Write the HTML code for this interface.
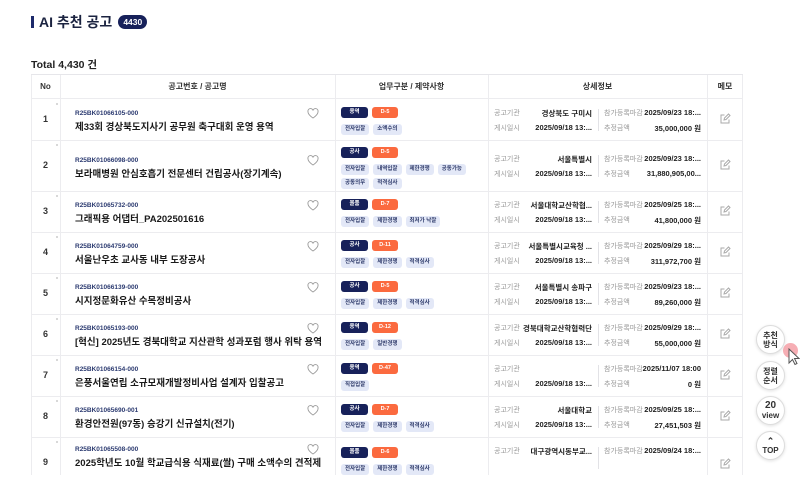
<!DOCTYPE html>
<html><head><meta charset="utf-8">
<style>
*{margin:0;padding:0;box-sizing:border-box}
body{width:800px;height:466px;overflow:hidden;background:#fff;font-family:"Liberation Sans","Noto Sans CJK KR",sans-serif;color:#222;position:relative}
.abs{position:absolute}
.title{left:31px;top:12px;font-size:14px;font-weight:bold;color:#1b2340;display:flex;align-items:center}
.title .bar{width:3px;height:12px;background:#1d2a6b;margin-right:5px}
.badge{background:#17215a;color:#fff;font-size:8.5px;font-weight:bold;border-radius:8px;padding:2px 5px;margin-left:6px;line-height:10px}
.total{left:31px;top:57px;font-size:10.5px;font-weight:bold;color:#222}
.tbl{left:31px;top:74px;width:712px;height:400px;border-top:1px solid #e6e6ea}
.hdr{position:absolute;left:0;top:0;width:712px;height:24px;border-bottom:1px solid #ececef;font-size:8px;font-weight:bold;color:#333}
.hdr div{position:absolute;top:0;height:24px;line-height:24px;text-align:center}
.vl{position:absolute;top:0;width:1px;height:400px;background:#ececef}
.row{position:absolute;left:0;width:712px;border-bottom:1px solid #ececef}
.no{position:absolute;left:0;width:29px;text-align:center;font-size:9px;font-weight:bold;color:#333}
.dot{position:absolute;left:25px;top:3px;width:2px;height:2px;border-radius:1px;background:#ccc}
.code{position:absolute;left:44px;font-size:6.5px;color:#2b3a70;font-weight:bold}
.nm{position:absolute;left:44px;font-size:9.5px;font-weight:bold;color:#1a1a1a;white-space:nowrap}
.heart{position:absolute;left:276px;width:12px;height:11px}
.tags{position:absolute;left:310px;width:148px;display:flex;flex-wrap:wrap;gap:3px 4px}
.t{height:11px;line-height:11px;font-size:5.5px;text-align:center;border-radius:3px;padding:0 4px;background:#e3e8f7;color:#2f3b6b;font-weight:bold}
.ty{background:#17215a;color:#fff;width:27px;padding:0}
.d{background:#fb6a3f;color:#fff;width:26px;padding:0}
.br{flex-basis:100%;height:0}
.lb{position:absolute;font-size:7px;color:#999}
.v{position:absolute;font-size:7.5px;font-weight:bold;color:#222;text-align:right;white-space:nowrap}
.sep{position:absolute;left:567px;width:1px;height:22px;background:#e2e2e6}
.memo{position:absolute;left:688px;width:12px;height:12px}
.fb{position:absolute;left:756px;width:29px;height:29px;border-radius:50%;background:#fff;border:1px solid #ddd;box-shadow:0 1px 3px rgba(0,0,0,.12);font-size:8px;font-weight:bold;color:#333;text-align:center;display:flex;flex-direction:column;justify-content:center;line-height:9px}
</style></head><body>
<div class="abs title"><span class="bar"></span>AI 추천 공고<span class="badge">4430</span></div>
<div class="abs total">Total 4,430 건</div>

<div class="abs tbl">
<div class="hdr">
 <div style="left:0;width:29px">No</div>
 <div style="left:29px;width:275px">공고번호 / 공고명</div>
 <div style="left:304px;width:153px">업무구분 / 제약사항</div>
 <div style="left:457px;width:219px">상세정보</div>
 <div style="left:676px;width:36px">메모</div>
</div>
<div class="vl" style="left:0"></div>
<div class="vl" style="left:29px"></div>
<div class="vl" style="left:304px"></div>
<div class="vl" style="left:457px"></div>
<div class="vl" style="left:676px"></div>
<div class="vl" style="left:711px"></div>

<div class="row" style="top:25px;height:41px">
 <div class="dot"></div><div class="no" style="top:14px">1</div>
 <div class="code" style="top:10px">R25BK01066105-000</div>
 <div class="nm" style="top:19px">제33회 경상북도지사기 공무원 축구대회 운영 용역</div>
 <svg class="heart" style="top:8px" viewBox="0 0 24 22"><path d="M12 20S2 14 2 7.5A5 5 0 0 1 12 5a5 5 0 0 1 10 2.5C22 14 12 20 12 20z" fill="none" stroke="#999" stroke-width="1.8"/></svg>
 <div class="tags" style="top:7px"><span class="t ty">용역</span><span class="t d">D-5</span><span class="br"></span><span class="t">전자입찰</span><span class="t">소액수의</span></div>
 <div class="lb" style="left:463px;top:8px">공고기관</div><div class="v" style="right:151px;top:8px">경상북도 구미시</div>
 <div class="lb" style="left:463px;top:23px">게시일시</div><div class="v" style="right:151px;top:23px">2025/09/18 13:...</div>
 <div class="sep" style="top:9px"></div>
 <div class="lb" style="left:573px;top:8px">참가등록마감</div><div class="v" style="right:42px;top:8px">2025/09/23 18:...</div>
 <div class="lb" style="left:573px;top:23px">추정금액</div><div class="v" style="right:42px;top:23px">35,000,000 원</div>
 <svg class="memo" style="top:13px" viewBox="0 0 24 24"><path d="M20 13v7H4V4h7" fill="none" stroke="#aaa" stroke-width="2"/><path d="M10 14l1-4 8-8 3 3-8 8z" fill="none" stroke="#aaa" stroke-width="2"/></svg>
</div>

<div class="row" style="top:66px;height:51px">
 <div class="dot"></div><div class="no" style="top:19px">2</div>
 <div class="code" style="top:16px">R25BK01066098-000</div>
 <div class="nm" style="top:25px">보라매병원 안심호흡기 전문센터 건립공사(장기계속)</div>
 <svg class="heart" style="top:14px" viewBox="0 0 24 22"><path d="M12 20S2 14 2 7.5A5 5 0 0 1 12 5a5 5 0 0 1 10 2.5C22 14 12 20 12 20z" fill="none" stroke="#999" stroke-width="1.8"/></svg>
 <div class="tags" style="top:6px"><span class="t ty">공사</span><span class="t d">D-5</span><span class="br"></span><span class="t">전자입찰</span><span class="t">내역입찰</span><span class="t">제한경쟁</span><span class="t">공동가능</span><span class="t">공동의무</span><span class="t">적격심사</span></div>
 <div class="lb" style="left:463px;top:13px">공고기관</div><div class="v" style="right:151px;top:13px">서울특별시</div>
 <div class="lb" style="left:463px;top:28px">게시일시</div><div class="v" style="right:151px;top:28px">2025/09/18 13:...</div>
 <div class="sep" style="top:14px"></div>
 <div class="lb" style="left:573px;top:13px">참가등록마감</div><div class="v" style="right:42px;top:13px">2025/09/23 18:...</div>
 <div class="lb" style="left:573px;top:28px">추정금액</div><div class="v" style="right:42px;top:28px">31,880,905,00...</div>
 <svg class="memo" style="top:18px" viewBox="0 0 24 24"><path d="M20 13v7H4V4h7" fill="none" stroke="#aaa" stroke-width="2"/><path d="M10 14l1-4 8-8 3 3-8 8z" fill="none" stroke="#aaa" stroke-width="2"/></svg>
</div>

<div class="row" style="top:117px;height:41px">
 <div class="dot"></div><div class="no" style="top:14px">3</div>
 <div class="code" style="top:10px">R25BK01065732-000</div>
 <div class="nm" style="top:19px">그래픽용 어댑터_PA202501616</div>
 <svg class="heart" style="top:8px" viewBox="0 0 24 22"><path d="M12 20S2 14 2 7.5A5 5 0 0 1 12 5a5 5 0 0 1 10 2.5C22 14 12 20 12 20z" fill="none" stroke="#999" stroke-width="1.8"/></svg>
 <div class="tags" style="top:7px"><span class="t ty">물품</span><span class="t d">D-7</span><span class="br"></span><span class="t">전자입찰</span><span class="t">제한경쟁</span><span class="t">최저가 낙찰</span></div>
 <div class="lb" style="left:463px;top:8px">공고기관</div><div class="v" style="right:151px;top:8px">서울대학교산학협...</div>
 <div class="lb" style="left:463px;top:23px">게시일시</div><div class="v" style="right:151px;top:23px">2025/09/18 13:...</div>
 <div class="sep" style="top:9px"></div>
 <div class="lb" style="left:573px;top:8px">참가등록마감</div><div class="v" style="right:42px;top:8px">2025/09/25 18:...</div>
 <div class="lb" style="left:573px;top:23px">추정금액</div><div class="v" style="right:42px;top:23px">41,800,000 원</div>
 <svg class="memo" style="top:13px" viewBox="0 0 24 24"><path d="M20 13v7H4V4h7" fill="none" stroke="#aaa" stroke-width="2"/><path d="M10 14l1-4 8-8 3 3-8 8z" fill="none" stroke="#aaa" stroke-width="2"/></svg>
</div>

<div class="row" style="top:158px;height:41px">
 <div class="dot"></div><div class="no" style="top:14px">4</div>
 <div class="code" style="top:10px">R25BK01064759-000</div>
 <div class="nm" style="top:19px">서울난우초 교사동 내부 도장공사</div>
 <svg class="heart" style="top:8px" viewBox="0 0 24 22"><path d="M12 20S2 14 2 7.5A5 5 0 0 1 12 5a5 5 0 0 1 10 2.5C22 14 12 20 12 20z" fill="none" stroke="#999" stroke-width="1.8"/></svg>
 <div class="tags" style="top:7px"><span class="t ty">공사</span><span class="t d">D-11</span><span class="br"></span><span class="t">전자입찰</span><span class="t">제한경쟁</span><span class="t">적격심사</span></div>
 <div class="lb" style="left:463px;top:8px">공고기관</div><div class="v" style="right:151px;top:8px">서울특별시교육청 ...</div>
 <div class="lb" style="left:463px;top:23px">게시일시</div><div class="v" style="right:151px;top:23px">2025/09/18 13:...</div>
 <div class="sep" style="top:9px"></div>
 <div class="lb" style="left:573px;top:8px">참가등록마감</div><div class="v" style="right:42px;top:8px">2025/09/29 18:...</div>
 <div class="lb" style="left:573px;top:23px">추정금액</div><div class="v" style="right:42px;top:23px">311,972,700 원</div>
 <svg class="memo" style="top:13px" viewBox="0 0 24 24"><path d="M20 13v7H4V4h7" fill="none" stroke="#aaa" stroke-width="2"/><path d="M10 14l1-4 8-8 3 3-8 8z" fill="none" stroke="#aaa" stroke-width="2"/></svg>
</div>

<div class="row" style="top:199px;height:41px">
 <div class="dot"></div><div class="no" style="top:14px">5</div>
 <div class="code" style="top:10px">R25BK01066139-000</div>
 <div class="nm" style="top:19px">시지정문화유산 수목정비공사</div>
 <svg class="heart" style="top:8px" viewBox="0 0 24 22"><path d="M12 20S2 14 2 7.5A5 5 0 0 1 12 5a5 5 0 0 1 10 2.5C22 14 12 20 12 20z" fill="none" stroke="#999" stroke-width="1.8"/></svg>
 <div class="tags" style="top:7px"><span class="t ty">공사</span><span class="t d">D-5</span><span class="br"></span><span class="t">전자입찰</span><span class="t">제한경쟁</span><span class="t">적격심사</span></div>
 <div class="lb" style="left:463px;top:8px">공고기관</div><div class="v" style="right:151px;top:8px">서울특별시 송파구</div>
 <div class="lb" style="left:463px;top:23px">게시일시</div><div class="v" style="right:151px;top:23px">2025/09/18 13:...</div>
 <div class="sep" style="top:9px"></div>
 <div class="lb" style="left:573px;top:8px">참가등록마감</div><div class="v" style="right:42px;top:8px">2025/09/23 18:...</div>
 <div class="lb" style="left:573px;top:23px">추정금액</div><div class="v" style="right:42px;top:23px">89,260,000 원</div>
 <svg class="memo" style="top:13px" viewBox="0 0 24 24"><path d="M20 13v7H4V4h7" fill="none" stroke="#aaa" stroke-width="2"/><path d="M10 14l1-4 8-8 3 3-8 8z" fill="none" stroke="#aaa" stroke-width="2"/></svg>
</div>

<div class="row" style="top:240px;height:41px">
 <div class="dot"></div><div class="no" style="top:14px">6</div>
 <div class="code" style="top:10px">R25BK01065193-000</div>
 <div class="nm" style="top:19px">[혁신] 2025년도 경북대학교 지산관학 성과포럼 행사 위탁 용역</div>
 <svg class="heart" style="top:8px" viewBox="0 0 24 22"><path d="M12 20S2 14 2 7.5A5 5 0 0 1 12 5a5 5 0 0 1 10 2.5C22 14 12 20 12 20z" fill="none" stroke="#999" stroke-width="1.8"/></svg>
 <div class="tags" style="top:7px"><span class="t ty">용역</span><span class="t d">D-12</span><span class="br"></span><span class="t">전자입찰</span><span class="t">일반경쟁</span></div>
 <div class="lb" style="left:463px;top:8px">공고기관</div><div class="v" style="right:151px;top:8px">경북대학교산학협력단</div>
 <div class="lb" style="left:463px;top:23px">게시일시</div><div class="v" style="right:151px;top:23px">2025/09/18 13:...</div>
 <div class="sep" style="top:9px"></div>
 <div class="lb" style="left:573px;top:8px">참가등록마감</div><div class="v" style="right:42px;top:8px">2025/09/29 18:...</div>
 <div class="lb" style="left:573px;top:23px">추정금액</div><div class="v" style="right:42px;top:23px">55,000,000 원</div>
 <svg class="memo" style="top:13px" viewBox="0 0 24 24"><path d="M20 13v7H4V4h7" fill="none" stroke="#aaa" stroke-width="2"/><path d="M10 14l1-4 8-8 3 3-8 8z" fill="none" stroke="#aaa" stroke-width="2"/></svg>
</div>

<div class="row" style="top:281px;height:41px">
 <div class="dot"></div><div class="no" style="top:14px">7</div>
 <div class="code" style="top:10px">R25BK01066154-000</div>
 <div class="nm" style="top:19px">은풍서울연립 소규모재개발정비사업 설계자 입찰공고</div>
 <svg class="heart" style="top:8px" viewBox="0 0 24 22"><path d="M12 20S2 14 2 7.5A5 5 0 0 1 12 5a5 5 0 0 1 10 2.5C22 14 12 20 12 20z" fill="none" stroke="#999" stroke-width="1.8"/></svg>
 <div class="tags" style="top:7px"><span class="t ty">용역</span><span class="t d">D-47</span><span class="br"></span><span class="t">직접입찰</span></div>
 <div class="lb" style="left:463px;top:8px">공고기관</div>
 <div class="lb" style="left:463px;top:23px">게시일시</div><div class="v" style="right:151px;top:23px">2025/09/18 13:...</div>
 <div class="sep" style="top:9px"></div>
 <div class="lb" style="left:573px;top:8px">참가등록마감</div><div class="v" style="right:42px;top:8px">2025/11/07 18:00</div>
 <div class="lb" style="left:573px;top:23px">추정금액</div><div class="v" style="right:42px;top:23px">0 원</div>
 <svg class="memo" style="top:13px" viewBox="0 0 24 24"><path d="M20 13v7H4V4h7" fill="none" stroke="#aaa" stroke-width="2"/><path d="M10 14l1-4 8-8 3 3-8 8z" fill="none" stroke="#aaa" stroke-width="2"/></svg>
</div>

<div class="row" style="top:322px;height:41px">
 <div class="dot"></div><div class="no" style="top:14px">8</div>
 <div class="code" style="top:10px">R25BK01065690-001</div>
 <div class="nm" style="top:19px">환경안전원(97동) 승강기 신규설치(전기)</div>
 <svg class="heart" style="top:8px" viewBox="0 0 24 22"><path d="M12 20S2 14 2 7.5A5 5 0 0 1 12 5a5 5 0 0 1 10 2.5C22 14 12 20 12 20z" fill="none" stroke="#999" stroke-width="1.8"/></svg>
 <div class="tags" style="top:7px"><span class="t ty">공사</span><span class="t d">D-7</span><span class="br"></span><span class="t">전자입찰</span><span class="t">제한경쟁</span><span class="t">적격심사</span></div>
 <div class="lb" style="left:463px;top:8px">공고기관</div><div class="v" style="right:151px;top:8px">서울대학교</div>
 <div class="lb" style="left:463px;top:23px">게시일시</div><div class="v" style="right:151px;top:23px">2025/09/18 13:...</div>
 <div class="sep" style="top:9px"></div>
 <div class="lb" style="left:573px;top:8px">참가등록마감</div><div class="v" style="right:42px;top:8px">2025/09/25 18:...</div>
 <div class="lb" style="left:573px;top:23px">추정금액</div><div class="v" style="right:42px;top:23px">27,451,503 원</div>
 <svg class="memo" style="top:13px" viewBox="0 0 24 24"><path d="M20 13v7H4V4h7" fill="none" stroke="#aaa" stroke-width="2"/><path d="M10 14l1-4 8-8 3 3-8 8z" fill="none" stroke="#aaa" stroke-width="2"/></svg>
</div>

<div class="row" style="top:363px;height:51px;border-bottom:none">
 <div class="dot"></div><div class="no" style="top:19px">9</div>
 <div class="code" style="top:8px">R25BK01065508-000</div>
 <div class="nm" style="top:17px">2025학년도 10월 학교급식용 식재료(쌀) 구매 소액수의 견적제</div>
 <svg class="heart" style="top:6px" viewBox="0 0 24 22"><path d="M12 20S2 14 2 7.5A5 5 0 0 1 12 5a5 5 0 0 1 10 2.5C22 14 12 20 12 20z" fill="none" stroke="#999" stroke-width="1.8"/></svg>
 <div class="tags" style="top:9px"><span class="t ty">물품</span><span class="t d">D-6</span><span class="br"></span><span class="t">전자입찰</span><span class="t">제한경쟁</span><span class="t">적격심사</span></div>
 <div class="lb" style="left:463px;top:8px">공고기관</div><div class="v" style="right:151px;top:8px">대구광역시동부교...</div>
 <div class="sep" style="top:9px"></div>
 <div class="lb" style="left:573px;top:8px">참가등록마감</div><div class="v" style="right:42px;top:8px">2025/09/24 18:...</div>
 <svg class="memo" style="top:20px" viewBox="0 0 24 24"><path d="M20 13v7H4V4h7" fill="none" stroke="#aaa" stroke-width="2"/><path d="M10 14l1-4 8-8 3 3-8 8z" fill="none" stroke="#aaa" stroke-width="2"/></svg>
</div>
</div>

<div class="fb" style="top:325px"><span>추천</span><span>방식</span></div>
<div class="fb" style="top:361px"><span>정렬</span><span>순서</span></div>
<div class="fb" style="top:396px;font-size:10px;line-height:10px"><span>20</span><span style="font-size:8px">view</span></div>
<div class="fb" style="top:431px"><span style="font-size:9px">&#8963;</span><span>TOP</span></div>
<div class="abs" style="left:783px;top:343px;width:15px;height:15px;border-radius:50%;background:rgba(240,120,130,.6)"></div>
<svg class="abs" style="left:788px;top:348px" width="12" height="18" viewBox="0 0 12 18"><path d="M1 1v14l3.5-3.5 2.5 5 2-1-2.5-5H11z" fill="#fff" stroke="#555" stroke-width="1"/></svg>
</body></html>
